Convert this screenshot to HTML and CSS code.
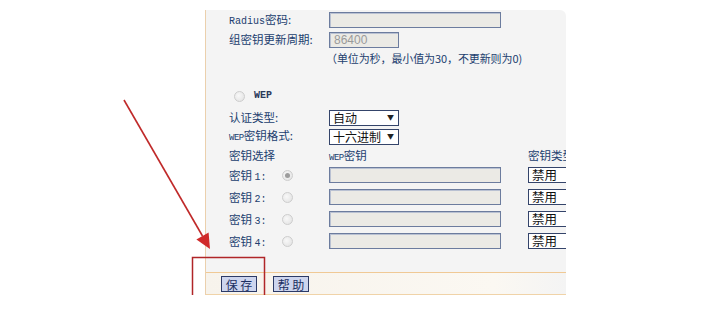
FILE: index.html
```html
<!DOCTYPE html>
<html lang="zh">
<head>
<meta charset="utf-8">
<link rel="stylesheet" href="styles.css">
</head>
<body>
<div class="page">
  <div class="panel">
    <div class="form">
      <div class="row h20">
        <span class="lbl"><span class="latin">Radius</span>密码:</span>
        <span class="box wide"></span>
      </div>
      <div class="row h20">
        <span class="lbl">组密钥更新周期:</span>
        <span class="box short"><span class="ph">86400</span></span>
      </div>
      <div class="row note-row">
        <span class="lbl"></span>
        <span class="note">（单位为秒，最小值为30，不更新则为0)</span>
      </div>
      <div class="row wep-row">
        <span class="radio"></span>
        <span class="latin bold">WEP</span>
      </div>
      <div class="row h19 mt2">
        <span class="lbl">认证类型:</span>
        <span class="select"><span class="opt">自动</span><span class="caret">▼</span></span>
      </div>
      <div class="row h19">
        <span class="lbl"><span class="latin sm">WEP</span>密钥格式:</span>
        <span class="select"><span class="opt">十六进制</span><span class="caret">▼</span></span>
      </div>
      <div class="row h20">
        <span class="lbl">密钥选择</span>
        <span class="colhead"><span class="latin sm">WEP</span>密钥</span>
        <span class="colhead type">密钥类型</span>
      </div>
      <div class="row key">
        <span class="klbl">密钥 <span class="latin">1:</span></span>
        <span class="radio on"></span>
        <span class="box wide"></span>
        <span class="tsel">禁用</span>
      </div>
      <div class="row key">
        <span class="klbl">密钥 <span class="latin">2:</span></span>
        <span class="radio"></span>
        <span class="box wide"></span>
        <span class="tsel">禁用</span>
      </div>
      <div class="row key">
        <span class="klbl">密钥 <span class="latin">3:</span></span>
        <span class="radio"></span>
        <span class="box wide"></span>
        <span class="tsel">禁用</span>
      </div>
      <div class="row key">
        <span class="klbl">密钥 <span class="latin">4:</span></span>
        <span class="radio"></span>
        <span class="box wide"></span>
        <span class="tsel">禁用</span>
      </div>
    </div>
    <div class="footer">
      <span class="btn">保 存</span>
      <span class="btn">帮 助</span>
    </div>
  </div>
  <svg class="annot" width="707" height="315" viewBox="0 0 707 315">
    <line x1="124" y1="100" x2="202.5" y2="236" stroke="#c02a2a" stroke-width="1.6"/>
    <polygon points="210,249 208.6,232.5 196.4,239.5" fill="#d02a2a"/>
    <path d="M192.5,295 V257.5 H264.5 V295" fill="none" stroke="#b02528" stroke-width="1.5"/>
  </svg>
</div>
</body>
</html>
```
FILE: styles.css
```css
* { box-sizing: border-box; }
html, body { margin: 0; padding: 0; background: #ffffff; }
body {
  font-family: "Noto Sans CJK SC", "Noto Sans", sans-serif;
  font-size: 11.5px;
  color: #22406f;
}
.page {
  position: relative;
  width: 707px;
  height: 315px;
  padding: 10px 0 0 205px;
  overflow: hidden;
}
.panel {
  width: 361px;
  height: 285px;
  background: #f4f4f4;
  border-left: 1px solid #ebd0ad;
  border-top-right-radius: 6px;
  overflow: hidden;
  display: flex;
  flex-direction: column;
}
.form {
  padding-left: 23px;
  display: flex;
  flex-direction: column;
}
.row {
  display: flex;
  align-items: center;
  white-space: nowrap;
  line-height: 1;
}
.h20 { height: 20px; }
.h19 { height: 19px; }
.mt2 { margin-top: 2px; }
.note-row { height: 16px; }
.wep-row { height: 20px; margin-top: 20px; padding-left: 5px; }
.key { height: 22px; align-items: flex-start; padding-top: 1px; }
.lbl { width: 100px; flex: none; }
.latin { font-family: "Liberation Mono", monospace; font-size: 10px; }
.latin.sm { font-size: 9px; letter-spacing: -0.5px; }
.bold { font-weight: bold; margin-left: 9px; color: #2a3a5a; }
.box {
  display: inline-flex;
  align-items: center;
  height: 16px;
  border: 1px solid #6c7c9e;
  box-shadow: inset 1px 1px 0 #b9c1d2;
  background: #ebeae5;
  flex: none;
}
.wide { width: 172px; }
.short { width: 70px; }
.ph { font-family: "Liberation Sans", sans-serif; font-size: 12px; color: #9a9a9a; padding-left: 4px; }
.note { font-size: 11px; letter-spacing: -0.1px; margin-left: -3px; }
.radio {
  width: 11px;
  height: 11px;
  border-radius: 50%;
  border: 1px solid #cdcdcd;
  background: radial-gradient(circle at 40% 40%, #f8f8f8, #e0e0e0);
  display: inline-flex;
  align-items: center;
  justify-content: center;
  flex: none;
}
.radio.on::after {
  content: "";
  width: 5px;
  height: 5px;
  border-radius: 50%;
  background: #9c9c9c;
}
.select {
  display: inline-flex;
  align-items: center;
  justify-content: space-between;
  width: 70px;
  height: 16px;
  border: 1px solid #34446a;
  background: #ffffff;
  color: #111111;
  font-size: 12px;
  padding: 0 4px 0 3px;
  flex: none;
  overflow: hidden;
}
.caret { font-size: 7px; color: #222; flex: none; }
.colhead { width: 199px; flex: none; }
.colhead.type { width: auto; }
.klbl { width: 53px; flex: none; padding-top: 3px; }
.key .radio { margin-top: 3px; margin-right: 36px; }
.tsel {
  margin-left: 27px;
  width: 50px;
  height: 16px;
  border: 1px solid #34446a;
  background: #ffffff;
  color: #111111;
  font-size: 12.5px;
  padding-left: 3px;
  display: inline-flex;
  align-items: center;
  flex: none;
}
.footer {
  margin-top: auto;
  height: 23px;
  border-top: 1px solid #f0c995;
  border-bottom: 1px solid #f0d3a8;
  background: linear-gradient(90deg, #f7f3ec 0%, #fbf8f2 80%, #f4f4f4 100%);
  display: flex;
  align-items: flex-start;
  padding: 3px 0 0 15px;
  gap: 16px;
}
.btn {
  display: inline-flex;
  align-items: center;
  justify-content: center;
  width: 36px;
  height: 16px;
  border: 1px solid #2c3a66;
  background: #cdd5ee;
  color: #1c2f62;
  font-size: 12px;
}
.annot {
  position: absolute;
  left: 0;
  top: 0;
  pointer-events: none;
}
```
